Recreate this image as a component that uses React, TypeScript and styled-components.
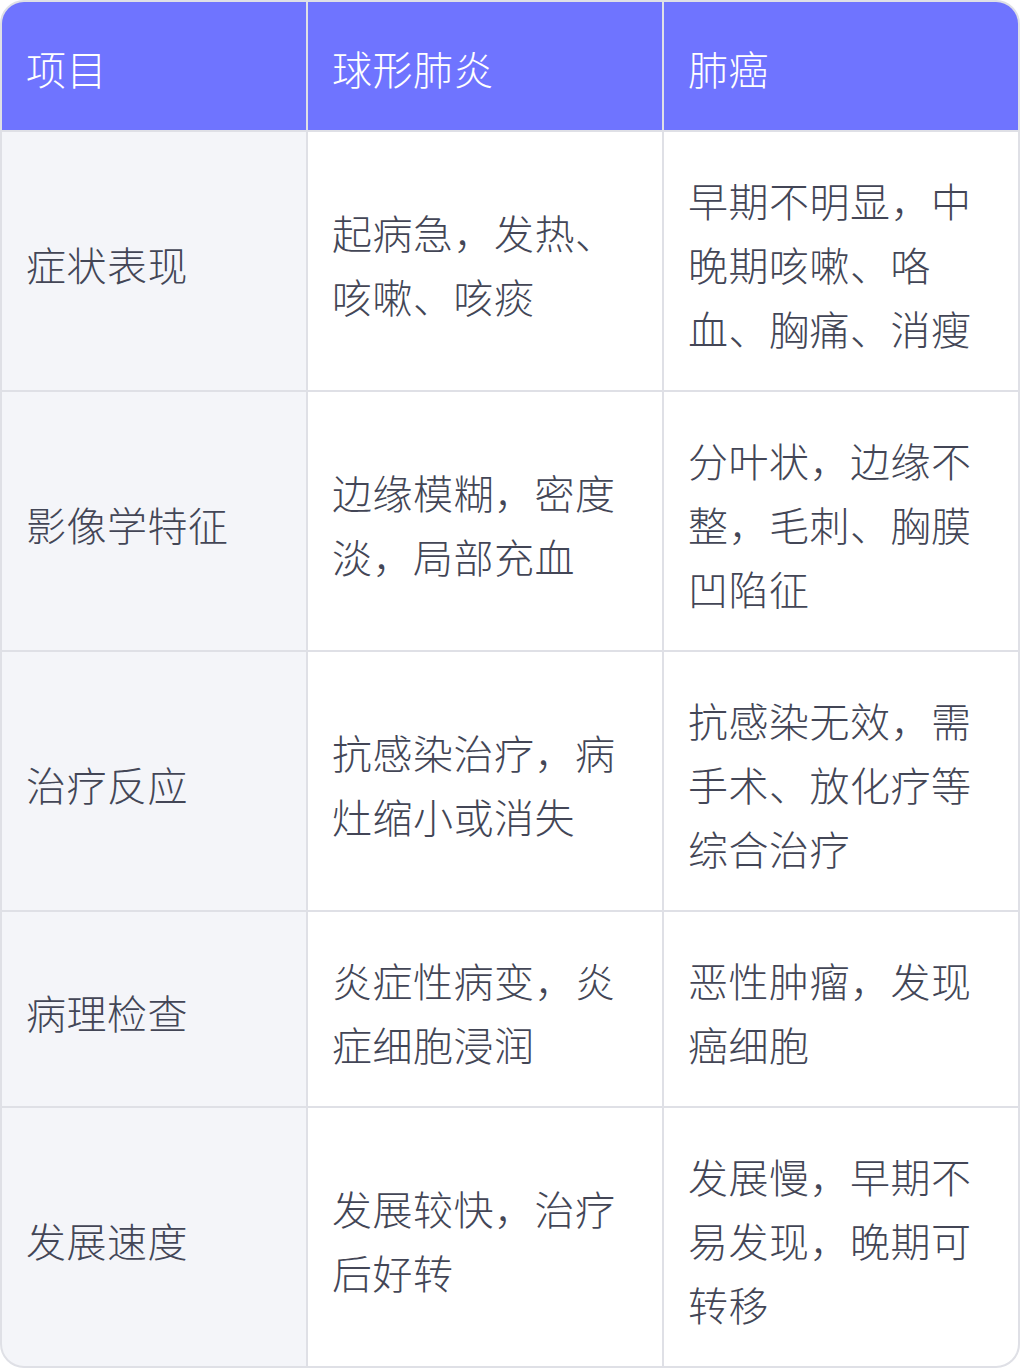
import React from 'react';
import styled, { createGlobalStyle } from 'styled-components';

const GlobalStyle = createGlobalStyle`
  html, body {
    margin: 0;
    padding: 0;
    background: #ffffff;
  }
  body {
    font-family: 'Noto Sans CJK SC', 'Noto Sans', sans-serif;
  }
`;

const Table = styled.div`
  width: 1020px;
  box-sizing: border-box;
  border: 2px solid #dfe0e6;
  border-radius: 24px;
  overflow: hidden;
  display: grid;
  grid-template-columns: 304px 354px 354px;
  gap: 2px;
  background-color: #dfe0e6;
`;

const Cell = styled.div<{ $head?: boolean; $label?: boolean }>`
  display: flex;
  align-items: center;
  box-sizing: border-box;
  padding: ${(p) => (p.$head ? '34px 24px 30px' : '36px 24px 30px')};
  font-size: 40px;
  line-height: 64px;
  letter-spacing: 0.5px;
  font-weight: 300;
  color: ${(p) => (p.$head ? '#ffffff' : '#434656')};
  background-color: ${(p) =>
    p.$head ? '#6f74ff' : p.$label ? '#f4f5f9' : '#ffffff'};
`;

const headers = ['项目', '球形肺炎', '肺癌'];

const rows: [string, string, string][] = [
  ['症状表现', '起病急，发热、咳嗽、咳痰', '早期不明显，中晚期咳嗽、咯血、胸痛、消瘦'],
  ['影像学特征', '边缘模糊，密度淡，局部充血', '分叶状，边缘不整，毛刺、胸膜凹陷征'],
  ['治疗反应', '抗感染治疗，病灶缩小或消失', '抗感染无效，需手术、放化疗等综合治疗'],
  ['病理检查', '炎症性病变，炎症细胞浸润', '恶性肿瘤，发现癌细胞'],
  ['发展速度', '发展较快，治疗后好转', '发展慢，早期不易发现，晚期可转移'],
];

export default function App() {
  return (
    <>
      <GlobalStyle />
      <Table>
        {headers.map((h) => (
          <Cell key={h} $head>
            {h}
          </Cell>
        ))}
        {rows.map((r) => (
          <React.Fragment key={r[0]}>
            <Cell $label>{r[0]}</Cell>
            <Cell>{r[1]}</Cell>
            <Cell>{r[2]}</Cell>
          </React.Fragment>
        ))}
      </Table>
    </>
  );
}
